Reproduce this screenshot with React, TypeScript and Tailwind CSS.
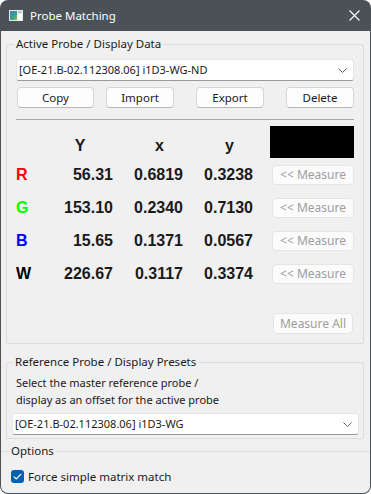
import React from 'react';

const ui = "font-['Noto_Sans',sans-serif]";
const bold = "font-['Liberation_Sans',Arial,sans-serif] font-bold";

const Chevron: React.FC = () => (
  <svg width="9" height="5" viewBox="0 0 9 5" className="shrink-0">
    <path d="M0.5 0.5 L4.5 4.5 L8.5 0.5" fill="none" stroke="#606060" strokeWidth="1" />
  </svg>
);

const Combo: React.FC<{ value: string }> = ({ value }) => (
  <div className="flex items-center h-[22px] w-full bg-white border border-[#e5e5e5] border-b-[#9a9a9a] rounded-[3px] pl-[2px] pr-[6px] text-[11px] text-[#1a1a1a]">
    <span className="flex-1 truncate">{value}</span>
    <Chevron />
  </div>
);

const Button: React.FC<{ label: string; className?: string }> = ({ label, className }) => (
  <button className={`h-[21px] bg-[#fdfdfd] border border-[#d6d6d6] border-b-[#b8b8b8] rounded-[4px] text-[11.5px] text-[#1a1a1a] leading-none ${className}`}>
    {label}
  </button>
);

const rows = [
  { k: 'R', color: 'text-[#ff0000]', Y: '56.31', x: '0.6819', y: '0.3238' },
  { k: 'G', color: 'text-[#00ff00]', Y: '153.10', x: '0.2340', y: '0.7130' },
  { k: 'B', color: 'text-[#0000ff]', Y: '15.65', x: '0.1371', y: '0.0567' },
  { k: 'W', color: 'text-black', Y: '226.67', x: '0.3117', y: '0.3374' },
];

export default function App() {
  return (
    <div className={`w-[371px] h-[494px] bg-[#4a5258] rounded-[8px] overflow-hidden flex flex-col ${ui}`}>
      {/* Title bar */}
      <div className="h-[31px] flex items-center shrink-0 pl-[9px] pr-[11px]">
        <svg width="14" height="11" viewBox="0 0 14 11" className="shrink-0">
          <defs>
            <linearGradient id="g" x1="0" y1="0" x2="1" y2="1">
              <stop offset="0" stopColor="#3a7fd0" />
              <stop offset="0.6" stopColor="#3aa58a" />
              <stop offset="1" stopColor="#8cc84a" />
            </linearGradient>
          </defs>
          <rect x="0" y="0" width="14" height="11" fill="#e8ecef" />
          <rect x="1" y="1" width="7" height="9" fill="url(#g)" />
          <rect x="9" y="1" width="4" height="2" fill="#b8c6d4" />
          <rect x="9" y="4" width="4" height="6" fill="#ffffff" />
        </svg>
        <span className="ml-[7px] text-[11.5px] text-white">Probe Matching</span>
        <svg width="11" height="11" viewBox="0 0 11 11" className="ml-auto">
          <path d="M0.5 0.5 L10.5 10.5 M10.5 0.5 L0.5 10.5" stroke="#ffffff" strokeWidth="1.1" />
        </svg>
      </div>

      {/* Client area */}
      <div className="flex-1 mx-[1px] mb-[1px] bg-[#f0f0f0] rounded-b-[7px] overflow-hidden pt-[5px] text-[#1a1a1a]">
        {/* Active probe */}
        <fieldset className="ml-[5px] mr-[6px] border border-[#dcdcdc] rounded-[2px] pl-[9px] pr-[9px] pb-[9px]">
          <legend className="text-[11.5px] leading-[16px] px-[2px] -ml-[2px]">Active Probe / Display Data</legend>
          <div className="mt-[7px]">
            <Combo value="[OE-21.B-02.112308.06] i1D3-WG-ND" />
          </div>
          <div className="flex mt-[6px]">
            <Button label="Copy" className="ml-[1px] w-[77px]" />
            <Button label="Import" className="ml-[12px] w-[68px]" />
            <Button label="Export" className="ml-[22px] w-[68px]" />
            <Button label="Delete" className="ml-[22px] w-[68px]" />
          </div>
          <div className="mt-[11px] h-px bg-[#a9a9a9]" />

          <div className={`mt-[6px] text-[16px] ${bold}`}>
            <div className="flex h-[32px]">
              <div className="w-[31px]" />
              <div className="w-[66px] text-center pt-[8px]">Y</div>
              <div className="w-[70px] text-center pl-[23px] pt-[8px]">x</div>
              <div className="w-[70px] text-center pl-[23px] pt-[8px]">y</div>
              <div className="w-[17px]" />
              <div className="w-[84px] bg-black" />
            </div>
            {rows.map((r) => (
              <div key={r.k} className="flex items-center h-[33px]">
                <div className={`w-[31px] ${r.color}`}>{r.k}</div>
                <div className="w-[66px] text-right">{r.Y}</div>
                <div className="w-[70px] text-right">{r.x}</div>
                <div className="w-[70px] text-right">{r.y}</div>
                <div className="w-[19px]" />
                <div className={`w-[82px] h-[20px] flex items-center justify-center bg-[#fbfbfb] border border-[#e5e5e5] rounded-[4px] text-[12px] font-normal text-[#9d9d9d] ${ui}`}>
                  &lt;&lt; Measure
                </div>
              </div>
            ))}
          </div>

          <div className="flex justify-end mt-[23px]">
            <div className="w-[80px] h-[21px] mr-[1px] flex items-center justify-center bg-[#fbfbfb] border border-[#e5e5e5] rounded-[4px] text-[12px] text-[#9d9d9d]">
              Measure All
            </div>
          </div>
        </fieldset>

        {/* Reference probe */}
        <fieldset className="mt-[10px] ml-[5px] mr-[6px] border border-[#dcdcdc] rounded-[2px] pl-[5px] pr-[4px] pb-[3px]">
          <legend className="text-[11.5px] leading-[16px] px-[2px] ml-[1px]">Reference Probe / Display Presets</legend>
          <div className="mt-[4px] pl-[4px] text-[11px] leading-[17px]">
            <div>Select the master reference probe /</div>
            <div>display as an offset for the active probe</div>
          </div>
          <div className="mt-[5px]">
            <Combo value="[OE-21.B-02.112308.06] i1D3-WG" />
          </div>
        </fieldset>

        {/* Options */}
        <fieldset className="mt-[4px] border-0 border-t border-[#dcdcdc] pl-[10px]">
          <legend className="text-[11.5px] leading-[16px] px-[2px] -ml-[2px]">Options</legend>
          <label className="flex items-center mt-[9px] text-[11.5px]">
            <span className="w-[13px] h-[13px] rounded-[3px] bg-[#005fb8] flex items-center justify-center">
              <svg width="9" height="7" viewBox="0 0 9 7">
                <path d="M0.8 3.6 L3.3 6 L8.2 0.9" fill="none" stroke="#ffffff" strokeWidth="1.2" />
              </svg>
            </span>
            <span className="ml-[4px]">Force simple matrix match</span>
          </label>
        </fieldset>
      </div>
    </div>
  );
}
